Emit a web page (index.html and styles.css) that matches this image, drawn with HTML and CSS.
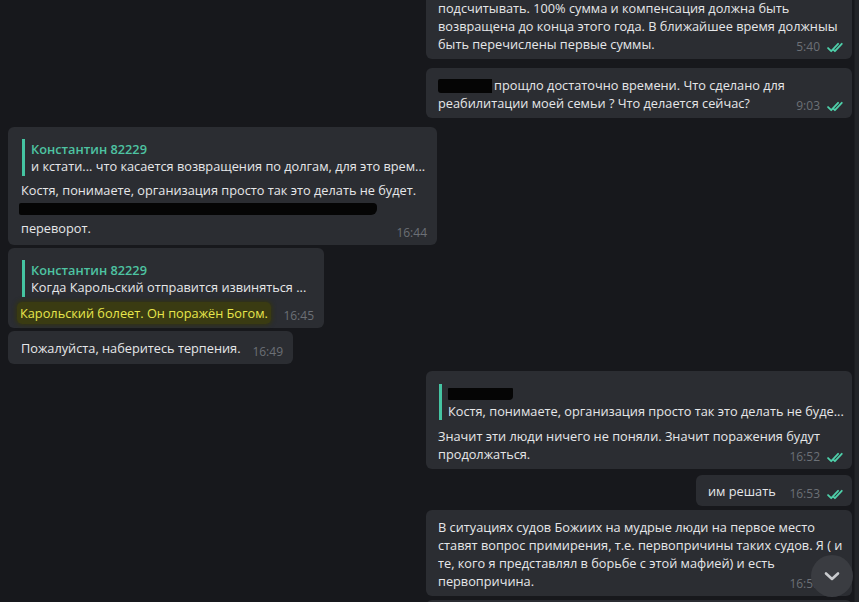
FILE: index.html
```html
<!DOCTYPE html>
<html lang="ru">
<head>
    <meta charset="UTF-8">
    <title>Чат</title>
    <link rel="stylesheet" href="styles.css">
</head>
<body>
    <div class="window">
        <div class="chat">
            <div class="msg out wide first">
                <div class="text">подсчитывать. 100% сумма и компенсация должна быть<br>возвращена до конца этого года. В ближайшее время должныы<br>быть перечислены первые суммы.</div>
                <div class="meta"><span class="time">5:40</span><svg class="check" viewBox="0 0 18 10"><path d="M1 5.5 L4 8.5 L10.5 1.5 M6.5 7.5 L7.5 8.5 L14 1.5"/></svg></div>
            </div>

            <div class="msg out wide gap-big">
                <div class="text"><span class="redact r-name"></span>прощло достаточно времени. Что сделано для<br>реабилитации моей семьи ? Что делается сейчас?</div>
                <div class="meta"><span class="time">9:03</span><svg class="check" viewBox="0 0 18 10"><path d="M1 5.5 L4 8.5 L10.5 1.5 M6.5 7.5 L7.5 8.5 L14 1.5"/></svg></div>
            </div>

            <div class="msg in gap-big b-first">
                <div class="reply">
                    <div class="reply-name">Константин 82229</div>
                    <div class="reply-text">и кстати... что касается возвращения по долгам, для это врем...</div>
                </div>
                <div class="text tall">Костя, понимаете, организация просто так это делать не будет.<br><span class="redact-line"><span class="redact r-long"></span></span><br>переворот.</div>
                <div class="meta"><span class="time">16:44</span></div>
            </div>

            <div class="msg in b-second">
                <div class="reply">
                    <div class="reply-name">Константин 82229</div>
                    <div class="reply-text">Когда Карольский отправится извиняться ...</div>
                </div>
                <div class="text marked"><mark class="marker">Карольский болеет. Он поражён Богом.</mark></div>
                <div class="meta"><span class="time">16:45</span></div>
            </div>

            <div class="msg in b-third">
                <div class="text">Пожалуйста, наберитесь терпения.</div>
                <div class="meta"><span class="time">16:49</span></div>
            </div>

            <div class="msg out wide with-reply">
                <div class="reply">
                    <div class="reply-name"><span class="redact r-reply"></span></div>
                    <div class="reply-text">Костя, понимаете, организация просто так это делать не буде...</div>
                </div>
                <div class="text">Значит эти люди ничего не поняли. Значит поражения будут<br>продолжаться.</div>
                <div class="meta"><span class="time">16:52</span><svg class="check" viewBox="0 0 18 10"><path d="M1 5.5 L4 8.5 L10.5 1.5 M6.5 7.5 L7.5 8.5 L14 1.5"/></svg></div>
            </div>

            <div class="msg out short">
                <div class="text">им решать</div>
                <div class="meta"><span class="time">16:53</span><svg class="check" viewBox="0 0 18 10"><path d="M1 5.5 L4 8.5 L10.5 1.5 M6.5 7.5 L7.5 8.5 L14 1.5"/></svg></div>
            </div>

            <div class="msg out wide">
                <div class="text">В ситуациях судов Божиих на мудрые люди на первое место<br>ставят вопрос примирения, т.е. первопричины таких судов. Я ( и<br>те, кого я представлял в борьбе с этой мафией) и есть<br>первопричина.</div>
                <div class="meta"><span class="time">16:58</span><svg class="check" viewBox="0 0 18 10"><path d="M1 5.5 L4 8.5 L10.5 1.5 M6.5 7.5 L7.5 8.5 L14 1.5"/></svg></div>
            </div>

            <div class="msg out wide next"></div>
        </div>
        <div class="scrollbar"></div>

        <button class="scroll-down" type="button">
            <svg viewBox="0 0 24 24"><path d="M6 9.5 L12 15 L18 9.5"/></svg>
        </button>
    </div>
</body>
</html>
```

FILE: styles.css
```css
body {
    margin: 0;
    background-color: #17181c;
    font-family: "Open Sans", "Noto Sans", sans-serif;
    font-size: 12.75px;
    color: #e6e7e9;
    overflow: hidden;
}

.window {
    position: relative;
    display: flex;
    height: 602px;
    overflow: hidden;
}

.chat {
    flex: 1;
    display: flex;
    flex-direction: column;
    padding: 0 2px 0 8px;
}

.scrollbar {
    width: 4px;
    background-color: #222428;
    border-left: 1px solid #1c1d21;
}

.msg {
    position: relative;
    background-color: #2b2d32;
    border-radius: 6px;
    padding: 8px 12px 6px 12px;
    margin-top: 4px;
    line-height: 18px;
    white-space: nowrap;
    box-sizing: border-box;
}

.msg.in {
    align-self: flex-start;
    padding-left: 13px;
}

.msg.out {
    align-self: flex-end;
}

.msg.wide {
    width: 426px;
}

.msg.first {
    margin-top: -10px;
    padding-top: 9px;
    padding-bottom: 6px;
}

.msg.gap-big {
    margin-top: 9px;
}

.b-first {
    width: 429px;
    padding-bottom: 7px;
}

.b-second {
    width: 316px;
    margin-top: 3px;
}

.b-third {
    width: 285px;
    margin-top: 3px;
    padding-top: 8px;
    padding-bottom: 7px;
}

.msg.with-reply {
    margin-top: 7px;
}

.msg.short {
    width: 156px;
    margin-top: 6px;
    padding-top: 7px;
}

.msg.next {
    height: 30px;
}

.reply {
    border-left: 3px solid #45c4a2;
    padding: 2px 0 1px 6px;
    margin: 4px 0 5px 1px;
    line-height: 17px;
}

.msg.with-reply .reply {
    margin: 5px 0 7px 1px;
    padding-bottom: 0;
}

.reply-name {
    color: #4ec3a2;
    font-weight: 600;
    height: 17px;
}

.reply-text {
    color: #e6e7e9;
}

.text.tall {
    line-height: 19px;
}

.text.marked {
    margin-top: 7px;
}

.meta {
    position: absolute;
    right: 6px;
    bottom: 3px;
    display: flex;
    align-items: center;
    gap: 7px;
}

.msg.in .meta {
    right: 10px;
}

.time {
    font-size: 12px;
    color: #6c7076;
}

.check {
    width: 19px;
    height: 11px;
    fill: none;
    stroke: #4ecfa9;
    stroke-width: 1.7;
    stroke-linecap: round;
    stroke-linejoin: round;
}

.redact {
    display: inline-block;
    background-color: #050505;
    vertical-align: middle;
}

.r-name {
    width: 54px;
    height: 14px;
    margin: -2px 2px 0 0;
    border-radius: 2px 0 0 3px;
}

.r-reply {
    width: 65px;
    height: 12px;
    margin-top: 2px;
    border-radius: 1px 1px 4px 1px;
    vertical-align: top;
}

.redact-line {
    display: inline-block;
    height: 19px;
}

.r-long {
    width: 358px;
    height: 12px;
    margin-left: -2px;
    border-radius: 2px 4px 6px 2px;
    vertical-align: top;
    margin-top: 3px;
}

.marker {
    background-color: #3a3b12;
    color: #e7e64c;
    padding: 2px 3px;
    margin-left: -4px;
    border-radius: 5px;
    box-shadow: 0 0 4px 1px #33340f;
}

.scroll-down {
    position: absolute;
    right: 6px;
    bottom: 5px;
    width: 42px;
    height: 42px;
    border: none;
    border-radius: 50%;
    background-color: #3a3c41;
    padding: 9px;
    display: flex;
}

.scroll-down svg {
    width: 24px;
    height: 24px;
    fill: none;
    stroke: #c9cbce;
    stroke-width: 2.6;
    stroke-linecap: round;
    stroke-linejoin: round;
}
```
